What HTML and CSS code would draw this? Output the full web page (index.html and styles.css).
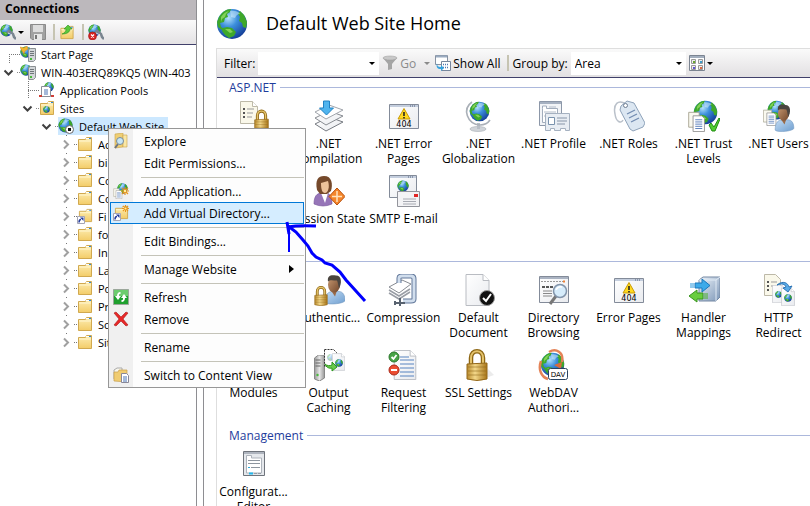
FILE: index.html
```html
<!DOCTYPE html>
<html lang="en">
<head>
<meta charset="utf-8">
<title>Internet Information Services Manager</title>
<link rel="stylesheet" href="styles.css">
</head>
<body>
<svg class="defs" aria-hidden="true">
  <defs>
    <radialGradient id="sea" cx=".38" cy=".3" r=".75"><stop offset="0" stop-color="#b5e2fb"/><stop offset=".4" stop-color="#3c8fdc"/><stop offset="1" stop-color="#123a94"/></radialGradient>
    <linearGradient id="gold" x2="1" y2="0"><stop offset="0" stop-color="#b98a2c"/><stop offset=".4" stop-color="#f3d88a"/><stop offset="1" stop-color="#a87518"/></linearGradient>
    <linearGradient id="folderFill" x2="0" y2="1"><stop offset="0" stop-color="#fdeeb4"/><stop offset="1" stop-color="#f3cc68"/></linearGradient>
    <linearGradient id="sheet" x2="1" y2="1"><stop offset="0" stop-color="#fff"/><stop offset="1" stop-color="#e9ebef"/></linearGradient>
    <linearGradient id="steel" x2="1" y2="1"><stop offset="0" stop-color="#eef4fa"/><stop offset="1" stop-color="#7d97b8"/></linearGradient>
    <linearGradient id="shirt" x2="1" y2="1"><stop offset="0" stop-color="#c3dcf4"/><stop offset="1" stop-color="#6f9fd0"/></linearGradient>
    <linearGradient id="skin" x2="1" y2="1"><stop offset="0" stop-color="#c99a72"/><stop offset="1" stop-color="#6f452a"/></linearGradient>
    <linearGradient id="tower" x2="1" y2="0"><stop offset="0" stop-color="#9a9a9a"/><stop offset=".5" stop-color="#e6e6e6"/><stop offset="1" stop-color="#989898"/></linearGradient>
  </defs>
  <symbol id="globe" viewBox="0 0 32 32">
    <circle cx="16" cy="16" r="15" fill="url(#sea)"/>
    <path d="M3 9C6 4 10 1 15 1l-1 3-3 2 1 3-3 1-1 4-4 1 1 4 3 2-2 1-4-3-1-5zM24 3l4 4 3 7-1 6-3-1-1-4-3-2 1-4-2-3zM7 20l4-1 5 1 4 4-2 4-5 2-4-3-3-4z" fill="#3ea82a"/>
    <path d="M5 9c2-3 4-5 8-6l-3 3-1 3-3 2-1 3zM9 21l5 0 3 3-3 1z" fill="#9ae06a" opacity=".75"/>
    <path d="M14 3c5-1 9 1 10 3-3 0-4 2-5 4l-4-1z" fill="#d9f1fd" opacity=".5"/>
  </symbol>
  <symbol id="lock" viewBox="0 0 22 32">
    <path d="M5 17V9c0-9 12-9 12 0v8" fill="none" stroke="#8e6714" stroke-width="4.500"/>
    <path d="M5 17V9c0-9 12-9 12 0v8" fill="none" stroke="#e5c46c" stroke-width="2"/>
    <path d="M1 15l20-1v16q-10 3-20 0z" fill="url(#gold)" stroke="#93681a"/>
    <path d="M2 18h18M2 22h18M2 26h18" stroke="#8d661a" opacity=".55"/>
  </symbol>
  <symbol id="folder" viewBox="0 0 16 16">
    <path d="M1.500 3.500h7l1-2h5v13h-13z" fill="url(#folderFill)" stroke="#d1a94f"/>
    <path d="M9 2.500h5" stroke="#fff"/><path d="M12 2.500h2" stroke="#2c86d8"/><path d="M2 5h12" stroke="#fff6d0"/>
  </symbol>
  <symbol id="shortcut" viewBox="0 0 8 8">
    <path d="M.5.500h7v7h-7z" fill="#fff" stroke="#a5a5b5"/><path d="M2 6.500C2 4 3 3.500 4 3.500" stroke="#223a9c" stroke-width="1.500" fill="none"/><path d="M3 1.500h3.500V5z" fill="#223a9c"/>
  </symbol>
  <symbol id="page" viewBox="0 0 24 32">
    <path d="M.5.500h17l6 6v25H.5z" fill="url(#sheet)" stroke="#b9bcc2"/><path d="M17.500.500v6h6" fill="#fff" stroke="#b9bcc2"/>
  </symbol>
  <symbol id="cert" viewBox="0 0 32 32">
    <path d="M2.500 1.500h12l5 5v17h-17z" fill="#faf8ea" stroke="#bdb9a8"/><path d="M14.500 1.500v5h5" fill="#fff" stroke="#bdb9a8"/>
    <path d="M5 9h2M5 13h2M5 17h2" stroke="#555" stroke-width="2"/><path d="M9 9h7M9 13h6M9 17h5" stroke="#999"/>
  </symbol>
  <symbol id="authorization" viewBox="0 0 32 32"><use href="#cert"/><use href="#lock" x="16" y="9" width="15" height="23"/></symbol>
  <symbol id="compilation" viewBox="0 0 32 32">
    <path d="M2 24l14-7 14 5-17 9z" fill="url(#sheet)" stroke="#777b82"/><path d="M2 18l14-7 14 5-17 9z" fill="url(#sheet)" stroke="#888c92"/><path d="M2 12l14-7 14 5-17 9z" fill="#fff" stroke="#a1a5ac"/>
    <path d="M10.500 1h6v7h4l-7 7-7-7h4z" fill="#50b4ee" stroke="#2182c4"/>
  </symbol>
  <symbol id="window" viewBox="0 0 32 32">
    <path d="M1.500 4.500h29v24h-29z" fill="url(#sheet)" stroke="#838b99"/><path d="M2 6h28" stroke="#c4cede" stroke-width="2"/><path d="M22 6h6" stroke="#52617b" stroke-dasharray="1 1"/>
  </symbol>
  <symbol id="error" viewBox="0 0 32 32">
    <use href="#window"/><path d="M16 8.500l6 10.500H10z" fill="#ffd91f" stroke="#c99a07" stroke-linejoin="round"/><path d="M16 12v4M16 17v1.500" stroke="#222" stroke-width="1.600"/>
    <text x="16" y="27" class="icon-404">404</text>
  </symbol>
  <symbol id="globalization" viewBox="0 0 32 32">
    <ellipse cx="15" cy="29" rx="8" ry="2.500" fill="#d0d4d9" stroke="#a5abb2" stroke-width=".6"/><path d="M14 23h3v6h-3z" fill="#b8bec6"/>
    <path d="M9 2C-1 9 4 24 17 25c5 0 8-2 10-5" fill="none" stroke="#aab0b8" stroke-width="1.600"/><use href="#globe" x="6" y="1" width="21" height="21"/>
  </symbol>
  <symbol id="profile" viewBox="0 0 32 32">
    <path d="M1.500 1.500h22v24h-22z" fill="#f2f4f7" stroke="#8c97a8"/><path d="M2 3h21" stroke="#a6b1c1" stroke-width="2"/><path d="M4.500 8.500V6h4v2.500h11v14h-15z" fill="#fff" stroke="#a2adbc"/><path d="M11 7h7M6 12h12M6 16h4" stroke="#b3bcc9"/>
    <path d="M7.500 13.500h24v17h-4v-2h-5v2h-6v-2h-4v2h-5z" fill="#e8edf3" stroke="#a5b1c0"/><path d="M10.500 17.500h6v7h-6z" fill="#fff" stroke="#7992ad"/><path d="M19 18h10M19 21h10M19 24h8" stroke="#8795a8"/>
  </symbol>
  <symbol id="roles" viewBox="0 0 32 32">
    <path d="M13 4C5-1 0 4 2 14c1 8 6 10 8 6" fill="none" stroke="#bac1ca" stroke-width="1.500"/>
    <path d="M8 6l6-5 7 2 11 20-2 4-10 4-3-2L7 10z" fill="#dce7f2" stroke="#8ea2b9"/><circle cx="12.500" cy="5.500" r="2" fill="#fff" stroke="#6e7e92"/>
    <path d="M14 14l8-4M16 18l8-4M18 22l8-4" stroke="#718bb0" stroke-width="1.300"/>
  </symbol>
  <symbol id="docs" viewBox="0 0 20 24">
    <path d="M.5 1.500h12v17H.5z" fill="#faf9ef" stroke="#a4a08e"/><path d="M5.500 5.500h10l3 3v15h-13z" fill="#fff" stroke="#8e8e8e"/><path d="M8 10h8M8 12.500h8M8 15h8M8 17.500h8M8 20h8" stroke="#4b74b4"/>
  </symbol>
  <symbol id="trust" viewBox="0 0 32 32"><use href="#globe" x="5" y="0" width="25" height="25"/><use href="#docs" x="0" y="11" width="18" height="21"/><path d="M21 25l2-2 3 4 5-9 1 1-5 12h-3z" fill="#51cc31" stroke="#218e13"/></symbol>
  <symbol id="man" viewBox="0 0 22 30">
    <path d="M1 28C1 20 4 17 9 17h6c4 0 6 4 6 9 0 3-17 5-20 2z" fill="url(#shirt)" stroke="#7399c0" stroke-width=".6"/><path d="M7 16h6l-2 6z" fill="#9a6b49"/><ellipse cx="10" cy="10" rx="6" ry="8" fill="url(#skin)"/><path d="M4 7C3 1 7 0 12 1c6 0 6 8 3 13-1-4-1-6-2-8-4 0-7-1-9 1z" fill="#4a4540"/>
  </symbol>
  <symbol id="users" viewBox="0 0 32 32"><use href="#globe" x="4" y="0" width="20" height="20"/><use href="#docs" x="0" y="9" width="14" height="17"/><use href="#man" x="11" y="4" width="21" height="28"/></symbol>
  <symbol id="session" viewBox="0 0 32 32">
    <path d="M1 29c0-8 3-11 8-11h5c4 1 5 6 5 11q-9 4-18 0z" fill="#9675b8" stroke="#735198" stroke-width=".6"/><path d="M8 18l4 10 3-10z" fill="#fff"/><path d="M4 15C2 5 5 1 11 1c8 0 9 8 7 15l-4 3H7z" fill="#75492b"/><path d="M8 8l7-2c2 6 0 12-3 12s-4-4-4-10z" fill="#edc29a"/>
    <path d="M24 13l8 8.500-8 8.500-8-8.500z" fill="#f4862b" stroke="#b8500e"/><path d="M24 16v11M19 21.500h10" stroke="#ffe2bd" stroke-width="1.500"/>
  </symbol>
  <symbol id="smtp" viewBox="0 0 32 32">
    <path d="M1.500.500h27v22h-27z" fill="url(#sheet)" stroke="#838b99"/><path d="M2 2h26" stroke="#c4cede" stroke-width="2"/><path d="M20 2h6" stroke="#52617b" stroke-dasharray="1 1"/><use href="#globe" x="9" y="5" width="12" height="12"/>
    <path d="M9.500 16.500h22v15h-22z" fill="#f3f3f5" stroke="#93959c"/><path d="M26 19h4v3h-4z" fill="#e12525"/><path d="M15 24h13M15 26.500h13M15 29h13" stroke="#a7aab2"/>
  </symbol>
  <symbol id="authentication" viewBox="0 0 32 32"><use href="#man" x="11" y="0" width="22" height="31"/><use href="#lock" x="1" y="12" width="14" height="20"/></symbol>
  <symbol id="compression" viewBox="0 0 32 32">
    <path d="M1 13l13-7 9 4-12 9z" fill="#fff" stroke="#878b92"/><path d="M1 16l10 6 11-7M1 19l10 6 11-7" fill="none" stroke="#999da5" stroke-width="1.500"/>
    <path d="M11 9V4q0-2 3-2h9q3 0 3 3v20q0 2-3 2h-8" fill="none" stroke="#62789a" stroke-width="5"/><path d="M11 9V4q0-2 3-2h9q3 0 3 3v20q0 2-3 2h-8" fill="none" stroke="#d1deed" stroke-width="3"/><path d="M7 29h10M12 24v8M7 27v4" stroke="#58626f" stroke-width="2"/>
  </symbol>
  <symbol id="document" viewBox="0 0 32 32"><use href="#page" x="2" y="0" width="25" height="32"/><circle cx="24" cy="24" r="7.500" fill="#111" stroke="#999"/><path d="M20 24l3 3 5-7" fill="none" stroke="#fff" stroke-width="2"/></symbol>
  <symbol id="browsing" viewBox="0 0 32 32">
    <path d="M1.500 2.500h29v26h-29z" fill="url(#sheet)" stroke="#838b99"/><path d="M2 4h28" stroke="#aab3c2" stroke-width="2"/><path d="M3 7.500h22" stroke="#999" stroke-dasharray="2 1"/><path d="M25 7.500h2" stroke="#ee8138" stroke-width="2"/><path d="M4 13h12" stroke="#222" stroke-width="1.500" stroke-dasharray="3 1"/><path d="M5 17h9M5 19.500h9M5 22h9" stroke="#888"/>
    <path d="M18 22l-6 8" stroke="#777" stroke-width="3"/><circle cx="22" cy="17" r="6.500" fill="#d6ecfb" stroke="#8294aa" stroke-width="1.500"/><path d="M18 16q2-4 6-3" stroke="#fff" stroke-width="1.500" fill="none"/>
  </symbol>
  <symbol id="handler" viewBox="0 0 32 32">
    <path d="M11 6l4-3h17v20l-4 4H11z" fill="url(#steel)" stroke="#7488a3"/><path d="M11 6h17v21M28 6l4-3" fill="none" stroke="#e1ebf5"/>
    <path d="M3 9v5M5 9v5" stroke="#2796dc"/><path d="M7 9h7V5l8 6.500-8 6.500v-4H7z" fill="#3caae9" stroke="#1a78bd"/><path d="M15 19H9v-3l-8 6 8 6v-3h6z" fill="#68cd3e" stroke="#39951f"/><path d="M17 19v6M19 19v6" stroke="#4bb02a"/>
  </symbol>
  <symbol id="redirect" viewBox="0 0 32 32"><path d="M1.500.500h11l5 5v16h-16z" fill="#faf8ea" stroke="#bdb9a8"/><path d="M4 8h2M4 12h2M4 16h2" stroke="#555" stroke-width="2"/><path d="M8 8h6M8 12h6" stroke="#999"/>
    <use href="#page" x="9" y="11" width="14" height="18"/><use href="#globe" x="12" y="17" width="7" height="7"/><use href="#page" x="18" y="14" width="14" height="18"/><use href="#globe" x="21" y="20" width="8" height="8"/><path d="M14 11c6-5 11-2 12 2l3-1-4 6-5-4 3-1c-1-3-4-4-9-2z" fill="#5aabe6" stroke="#2c73b5"/>
  </symbol>
  <symbol id="towericon" viewBox="0 0 12 26"><path d="M1 3l4-3h6v23l-5 3-5-2z" fill="url(#tower)" stroke="#888"/><path d="M2 5h5M2 8h5M2 11h5" stroke="#666"/><circle cx="4" cy="20" r="1.200" fill="#49ba3d"/></symbol>
  <symbol id="output" viewBox="0 0 32 32"><use href="#towericon" x="0" y="6" width="13" height="26"/><path d="M11.500.500h9l3 3v14h-12z" fill="#fff" stroke="#333" stroke-dasharray="2 1"/><use href="#globe" x="14" y="5" width="7" height="7" opacity=".4"/><use href="#page" x="19" y="4" width="13" height="18"/><use href="#globe" x="22" y="10" width="8" height="8"/><path d="M12 15c2 2 5 2 7 1v-3l5 5-5 4v-3c-3 1-6-1-7-4z" fill="#68ca4b" stroke="#2f9820"/></symbol>
  <symbol id="filtering" viewBox="0 0 32 32"><use href="#page" x="5" y="1" width="24" height="30"/><path d="M12 8h9M12 11h14M12 15h14M12 19h14M12 23h14M12 27h14" stroke="#5683c0"/><circle cx="6" cy="8" r="5" fill="#48a447" stroke="#2a772b"/><path d="M3.500 8l2 2 3-4" stroke="#fff" stroke-width="1.800" fill="none"/><circle cx="6" cy="21" r="5" fill="#eb4d31" stroke="#aa2818"/><path d="M3 21h6" stroke="#fff" stroke-width="2"/></symbol>
  <symbol id="ssl" viewBox="0 0 32 32"><path d="M20 30l11-4-6-6z" fill="#ddd" opacity=".6"/><use href="#lock" x="3" y="0" width="22" height="32"/></symbol>
  <symbol id="webdav" viewBox="0 0 32 32"><use href="#globe" x="2" y="3" width="25" height="25"/><path d="M11 3c7-4 15 0 13 10M3 12C0 20 3 28 10 30" fill="none" stroke="#e48357" stroke-width="2.500"/><path d="M16 16l8-3-1 7" fill="#d96c3c"/><rect x="10.500" y="19.500" width="19" height="11" rx="2" fill="#fff" stroke="#28425f"/><text x="20" y="28" class="icon-dav">DAV</text></symbol>
  <symbol id="config" viewBox="0 0 32 32"><path d="M5.500 3.500h21v24h-21z" fill="#e5e8ec" stroke="#6f747c"/><path d="M6 5h20" stroke="#aeb4be" stroke-width="2"/><path d="M8.500 10V7.500h5V10h10v15h-15z" fill="#fff" stroke="#adb3bb"/><path d="M10 12.500h12M10 15.500h12" stroke="#8e969f"/><path d="M10 19.500h2" stroke="#2aa9d9"/><path d="M13 19.500h9" stroke="#8e969f"/><path d="M11 25.500h4" stroke="#21b8ee" stroke-width="2"/><path d="M16 25.500h8" stroke="#969da6" stroke-dasharray="3 1"/></symbol>

  <symbol id="connect" viewBox="0 0 16 16"><use href="#globe" width="13" height="13"/><path d="M7 9l2-2 4 3 1 3 2 2" stroke="#7a8590" stroke-width="2.500" fill="none"/><path d="M8 9l4 2" stroke="#dce4ec"/></symbol>
  <symbol id="disconnect" viewBox="0 0 16 16"><use href="#connect"/><circle cx="4.500" cy="12" r="4" fill="#d92424" stroke="#9c1414" stroke-width=".6"/><path d="M3 10.500l3 3m0-3l-3 3" stroke="#fff" stroke-width="1.300"/></symbol>
  <symbol id="save" viewBox="0 0 16 16"><path d="M.5.500h15v15H2l-1.500-1.500z" fill="#a2a2a2" stroke="#8b8b8b"/><path d="M3 1h10v7H3z" fill="#dedede"/><path d="M4 10h8v6H4z" fill="#e7e7e7"/><path d="M5 11h2v4H5z" fill="#777"/></symbol>
  <symbol id="up" viewBox="0 0 16 16"><use href="#folder" y="1" width="16" height="15"/><path d="M3 10c3-1 4-3 4-5H5l4-4 4 4h-2c0 3-3 5-8 5z" fill="#59c83c" stroke="#2c9020" stroke-width=".6"/></symbol>
  <symbol id="server" viewBox="0 0 16 16"><use href="#globe" width="12" height="12"/><path d="M8.500 3.500l2-1h5v11l-2 2h-5z" fill="#d2d6d8" stroke="#8b8f92"/><path d="M10 5.500h4M10 7.500h4M10 9.500h4" stroke="#70767a"/><path d="M10 12h2v2h-2z" fill="#49ba3d"/></symbol>
  <symbol id="start" viewBox="0 0 16 16"><use href="#server"/><path d="M0 1l4 1 3-2 1 3-3 2-1 3-2-3z" fill="#f3b52e" stroke="#ce8719" stroke-width=".5"/></symbol>
  <symbol id="pools" viewBox="0 0 16 16"><use href="#globe" x="5" width="10" height="10"/><path d="M2.500 4.500h7l2 2v8h-9z" fill="#fff" stroke="#8a8f98"/><path d="M5 8h4M5 10h4M5 12h4" stroke="#4b74b4"/><path d="M0 13h3v2H0zM12 13h3v2h-3z" fill="#cf4038"/></symbol>
  <symbol id="sites" viewBox="0 0 16 16"><use href="#folder"/><use href="#globe" x="4" y="6" width="7" height="7"/></symbol>
  <symbol id="site" viewBox="0 0 16 16"><use href="#globe" width="15" height="15"/><circle cx="11.500" cy="11.500" r="4" fill="#fff" stroke="#666"/><path d="M10 10h3v3h-3z" fill="#111"/></symbol>
  <symbol id="virtual" viewBox="0 0 16 16"><use href="#folder" x="1" width="15" height="15"/><use href="#shortcut" y="8" width="8" height="8"/></symbol>
  <symbol id="explore" viewBox="0 0 16 16"><path d="M2 1l8-1v14l-8 1z" fill="#efcf75" stroke="#caa147" stroke-width=".6"/><path d="M10 2h4v12h-4z" fill="#f9e7a6" stroke="#caa147" stroke-width=".6"/><path d="M5 11l-3 4" stroke="#6f7680" stroke-width="2"/><circle cx="7" cy="8" r="3.500" fill="#c8e6f5" stroke="#788b9b"/></symbol>
  <symbol id="spark" viewBox="0 0 8 8"><path d="M4 0v8M0 4h8M1 1l6 6M7 1L1 7" stroke="#e99418" stroke-width="1.200"/><circle cx="4" cy="4" r="1.200" fill="#fff1a0"/></symbol>
  <symbol id="addapp" viewBox="0 0 16 16"><use href="#globe" x="4" width="11" height="11"/><use href="#docs" x="0" y="5" width="10" height="11"/><use href="#spark" x="8" y="4" width="8" height="8"/></symbol>
  <symbol id="addvirtual" viewBox="0 0 16 16"><use href="#virtual"/><use href="#spark" x="9" y="0" width="7" height="7"/></symbol>
  <symbol id="refresh" viewBox="0 0 16 16"><path d="M.5.500h15v15H.5z" fill="#1fa02e" stroke="#9ba79b"/><path d="M1 1h14v6H1z" fill="#6ccc6e"/><path d="M7.500 3C5 3 4 5 4 7H2l3 4 3-4H6c0-2 0-2 1.500-2zM8.500 13c2.500 0 3.500-2 3.500-4h2l-3-4-3 4h2c0 2 0 2-1.500 2z" fill="#fff"/></symbol>
  <symbol id="remove" viewBox="0 0 16 16"><path d="M1 2l2-1 5 5 5-5 2 1-5 6 5 6-2 1-5-5-5 5-2-1 5-6z" fill="#e72828" stroke="#a91b1b" stroke-width=".6"/></symbol>
  <symbol id="switch" viewBox="0 0 16 16"><path d="M1 3l3-2h5v11H1z" fill="#f8f6ec" stroke="#aaa"/><path d="M1 14V5h4l1-2h8v12z" fill="#f0cc71" stroke="#c79f4b" stroke-width=".7"/><path d="M8.500 6.500h5l2 2v7h-7z" fill="#fff" stroke="#889"/><path d="M10 10h4M10 12h4M10 14h4" stroke="#4b74b4"/></symbol>
  <symbol id="funnel" viewBox="0 0 16 16"><path d="M1 3h14l-5 6v5l-4 1V9z" fill="#a5a5a5"/><ellipse cx="8" cy="3" rx="7" ry="2" fill="#c8c8c8" stroke="#999" stroke-width=".5"/></symbol>
  <symbol id="showall" viewBox="0 0 16 16"><path d="M.5.500h12v9H.5z" fill="#fff" stroke="#8691a1"/><path d="M1 1.500h11" stroke="#9aabc0" stroke-width="2"/><path d="M6.500 6.500h9v9h-9z" fill="#fff" stroke="#77869c"/><path d="M8 9.500h6M8 12.500h6" stroke="#5178b0" stroke-width="1.500" stroke-dasharray="1 1"/><path d="M2 8c0 3 1 4 4 4v-2l3 3-3 3v-2c-4 0-5-2-4-6z" fill="#36a3df"/></symbol>
  <symbol id="views" viewBox="0 0 16 16"><path d="M.5.500h15v15H.5z" fill="#fff" stroke="#7b8491"/><path d="M1 2h14" stroke="#a3afbe" stroke-width="2"/><path d="M2.500 4.500h4v4h-4zM9.500 4.500h4v4h-4zM2.500 10.500h4v4h-4zM9.500 10.500h4v4h-4z" fill="#eee" stroke="#999"/><path d="M4 6h2v2H4z" fill="#69a72e"/><path d="M11 6h2v2h-2z" fill="#3b9ccc"/><path d="M4 12h2v2H4z" fill="#6254d2"/><path d="M11 12h2v2h-2z" fill="#dc6943"/></symbol>

  <symbol id="t-start" viewBox="0 0 20 18"><path d="M9.500 9v9M9 9.500h11" stroke="#777" stroke-dasharray="1 1" fill="none"/></symbol>
  <symbol id="t-leaf" viewBox="0 0 20 18"><path d="M9.500 0v18M9 9.500h11" stroke="#777" stroke-dasharray="1 1" fill="none"/></symbol>
  <symbol id="t-open" viewBox="0 0 20 18"><path d="M4.500 7.500l4 4 4-4" stroke="#404040" stroke-width="2" fill="none"/><path d="M17 9.500h3" stroke="#888" stroke-dasharray="1 1"/></symbol>
  <symbol id="t-closed" viewBox="0 0 20 18"><path d="M7 5.500l4 4-4 4" stroke="#a0a0a0" stroke-width="2" fill="none"/><path d="M17 9.500h3M9.500 0v1" stroke="#777" stroke-dasharray="1 1"/></symbol>
</svg>

<div class="app">
  <aside class="connections">
    <h2 class="pane-title">Connections</h2>
    <div class="bar">
      <button class="tool drop" aria-label="Connect"><svg class="i16"><use href="#connect"/></svg><span class="caret"></span></button>
      <button class="tool" aria-label="Save"><svg class="i16"><use href="#save"/></svg></button>
      <span class="divider"></span>
      <button class="tool" aria-label="Up"><svg class="i16"><use href="#up"/></svg></button>
      <span class="divider"></span>
      <button class="tool" aria-label="Disconnect"><svg class="i16"><use href="#disconnect"/></svg></button>
    </div>
    <ul class="tree">
      <li><div class="node"><svg class="twig"><use href="#t-start"/></svg><svg class="i16"><use href="#start"/></svg><span>Start Page</span></div></li>
      <li><div class="node"><svg class="twig"><use href="#t-open"/></svg><svg class="i16"><use href="#server"/></svg><span>WIN-403ERQ89KQ5 (WIN-403</span></div>
        <ul>
          <li><div class="node"><svg class="twig"><use href="#t-leaf"/></svg><svg class="i16"><use href="#pools"/></svg><span>Application Pools</span></div></li>
          <li><div class="node"><svg class="twig"><use href="#t-open"/></svg><svg class="i16"><use href="#sites"/></svg><span>Sites</span></div>
            <ul>
              <li><div class="node"><svg class="twig"><use href="#t-open"/></svg><div class="picked"><svg class="i16"><use href="#site"/></svg><span>Default Web Site</span></div></div>
                <ul>
                  <li><div class="node"><svg class="twig"><use href="#t-closed"/></svg><svg class="i16"><use href="#folder"/></svg><span>Ac</span></div></li>
                  <li><div class="node"><svg class="twig"><use href="#t-closed"/></svg><svg class="i16"><use href="#folder"/></svg><span>bi</span></div></li>
                  <li><div class="node"><svg class="twig"><use href="#t-closed"/></svg><svg class="i16"><use href="#folder"/></svg><span>Co</span></div></li>
                  <li><div class="node"><svg class="twig"><use href="#t-closed"/></svg><svg class="i16"><use href="#folder"/></svg><span>Co</span></div></li>
                  <li><div class="node"><svg class="twig"><use href="#t-closed"/></svg><svg class="i16"><use href="#virtual"/></svg><span>Fi</span></div></li>
                  <li><div class="node"><svg class="twig"><use href="#t-closed"/></svg><svg class="i16"><use href="#folder"/></svg><span>fo</span></div></li>
                  <li><div class="node"><svg class="twig"><use href="#t-closed"/></svg><svg class="i16"><use href="#folder"/></svg><span>In</span></div></li>
                  <li><div class="node"><svg class="twig"><use href="#t-closed"/></svg><svg class="i16"><use href="#folder"/></svg><span>La</span></div></li>
                  <li><div class="node"><svg class="twig"><use href="#t-closed"/></svg><svg class="i16"><use href="#folder"/></svg><span>Po</span></div></li>
                  <li><div class="node"><svg class="twig"><use href="#t-closed"/></svg><svg class="i16"><use href="#folder"/></svg><span>Pr</span></div></li>
                  <li><div class="node"><svg class="twig"><use href="#t-closed"/></svg><svg class="i16"><use href="#folder"/></svg><span>Sc</span></div></li>
                  <li><div class="node"><svg class="twig"><use href="#t-closed"/></svg><svg class="i16"><use href="#folder"/></svg><span>Sit</span></div></li>
                </ul>
              </li>
            </ul>
          </li>
        </ul>
      </li>
    </ul>
  </aside>

  <main class="home">
    <header class="heading"><svg class="i32"><use href="#globe"/></svg><h1>Default Web Site Home</h1></header>
    <div class="content">
      <div class="filters">
        <label for="filter">Filter:</label>
        <div class="combo filter-box"><input id="filter" type="text"><span class="caret"></span></div>
        <button class="tool go" disabled><svg class="i16"><use href="#funnel"/></svg>Go<span class="caret"></span></button>
        <button class="tool show"><svg class="i16"><use href="#showall"/></svg>Show All</button>
        <span class="divider"></span>
        <label for="group">Group by:</label>
        <div class="combo group-box"><select id="group"><option>Area</option></select><span class="caret"></span></div>
        <button class="tool views" aria-label="Views"><svg class="i16"><use href="#views"/></svg><span class="caret"></span></button>
      </div>
      <div class="groups">
        <section>
          <h3>ASP.NET</h3>
          <div class="tiles">
            <div class="tile"><svg class="i32"><use href="#authorization"/></svg></div>
            <div class="tile"><svg class="i32"><use href="#compilation"/></svg>.NET<br>Compilation</div>
            <div class="tile"><svg class="i32"><use href="#error"/></svg>.NET Error<br>Pages</div>
            <div class="tile"><svg class="i32"><use href="#globalization"/></svg>.NET<br>Globalization</div>
            <div class="tile"><svg class="i32"><use href="#profile"/></svg>.NET Profile</div>
            <div class="tile"><svg class="i32"><use href="#roles"/></svg>.NET Roles</div>
            <div class="tile"><svg class="i32"><use href="#trust"/></svg>.NET Trust<br>Levels</div>
            <div class="tile"><svg class="i32"><use href="#users"/></svg>.NET Users</div>
            <div class="tile"></div>
            <div class="tile"><svg class="i32"><use href="#session"/></svg>Session State</div>
            <div class="tile"><svg class="i32"><use href="#smtp"/></svg>SMTP E-mail</div>
          </div>
        </section>
        <section>
          <h3 aria-label="IIS"></h3>
          <div class="tiles">
            <div class="tile"></div>
            <div class="tile"><svg class="i32"><use href="#authentication"/></svg>Authentic...</div>
            <div class="tile"><svg class="i32"><use href="#compression"/></svg>Compression</div>
            <div class="tile"><svg class="i32"><use href="#document"/></svg>Default<br>Document</div>
            <div class="tile"><svg class="i32"><use href="#browsing"/></svg>Directory<br>Browsing</div>
            <div class="tile"><svg class="i32"><use href="#error"/></svg>Error Pages</div>
            <div class="tile"><svg class="i32"><use href="#handler"/></svg>Handler<br>Mappings</div>
            <div class="tile"><svg class="i32"><use href="#redirect"/></svg>HTTP<br>Redirect</div>
            <div class="tile"><svg class="i32"></svg>Modules</div>
            <div class="tile"><svg class="i32"><use href="#output"/></svg>Output<br>Caching</div>
            <div class="tile"><svg class="i32"><use href="#filtering"/></svg>Request<br>Filtering</div>
            <div class="tile"><svg class="i32"><use href="#ssl"/></svg>SSL Settings</div>
            <div class="tile"><svg class="i32"><use href="#webdav"/></svg>WebDAV<br>Authori...</div>
          </div>
        </section>
        <section>
          <h3>Management</h3>
          <div class="tiles">
            <div class="tile"><svg class="i32"><use href="#config"/></svg>Configurat...<br>Editor</div>
          </div>
        </section>
      </div>
    </div>
  </main>
</div>

<div class="menu" role="menu">
  <button role="menuitem"><svg class="i16"><use href="#explore"/></svg>Explore</button>
  <button role="menuitem"><svg class="i16"></svg>Edit Permissions...</button>
  <hr>
  <button role="menuitem"><svg class="i16"><use href="#addapp"/></svg>Add Application...</button>
  <button role="menuitem" class="hot"><svg class="i16"><use href="#addvirtual"/></svg>Add Virtual Directory...</button>
  <hr>
  <button role="menuitem"><svg class="i16"></svg>Edit Bindings...</button>
  <hr>
  <button role="menuitem"><svg class="i16"></svg>Manage Website<span class="more"></span></button>
  <hr>
  <button role="menuitem"><svg class="i16"><use href="#refresh"/></svg>Refresh</button>
  <button role="menuitem"><svg class="i16"><use href="#remove"/></svg>Remove</button>
  <hr>
  <button role="menuitem"><svg class="i16"></svg>Rename</button>
  <hr>
  <button role="menuitem"><svg class="i16"><use href="#switch"/></svg>Switch to Content View</button>
</div>

<svg class="pen" viewBox="0 0 84 86" aria-hidden="true">
  <path d="M5 8l8 6 7 8 5 6 4 7 4 4 6 3 3 3 7 2 8 7 6 8 19 21" stroke-width="3"/>
  <path d="M4 4l2 12M5 9q10-2 28-1" stroke-width="3"/>
  <path d="M6 8v26" stroke-width="2"/>
</svg>
</body>
</html>
```

FILE: styles.css
```css
* { box-sizing: border-box; }

body {
  margin: 0;
  height: 100vh;
  overflow: hidden;
  background: #fff;
  color: #000;
  font: 12px/15px "Open Sans", "Noto Sans", sans-serif;
}

h1, h2, h3, ul { margin: 0; padding: 0; font-weight: 400; }
ul { list-style: none; }
button, input, select { margin: 0; border: 0; padding: 0; background: none; color: inherit; font: inherit; }

.defs { position: absolute; width: 0; height: 0; }
.i16 { width: 16px; height: 16px; flex: none; }
.i32 { width: 32px; height: 32px; flex: none; }
.icon-404 { font: 400 8px "DejaVu Sans", sans-serif; text-anchor: middle; }
.icon-dav { font: 400 7px "DejaVu Sans", sans-serif; text-anchor: middle; }

.app { display: grid; grid-template-columns: 197px minmax(0, 1fr); column-gap: 6px; height: 100%; }

/* Connections pane */
.connections { border-right: 1px solid #8e8e92; overflow: hidden; }
.pane-title { height: 20px; padding: 0 5px; background: #bcb8bc; font-size: 12px; line-height: 18px; font-weight: 700; }
.bar { display: flex; align-items: center; height: 25px; gap: 4px; border-bottom: 1px solid #40406a; background: linear-gradient(#fafafa, #e4e2e4); }
.tool { display: flex; align-items: center; gap: 4px; white-space: nowrap; }
.drop { gap: 2px; margin-right: 2px; }
.divider { width: 2px; height: 16px; margin-left: 3px; background: #c6c4b2; flex: none; }
.caret { border: 3px solid transparent; border-top-color: #000; border-bottom: 0; flex: none; }

.tree { font-size: 11px; }
.tree ul { padding-left: 19px; }
.node { display: flex; align-items: center; height: 18px; white-space: nowrap; }
.node .i16 { margin-right: 5px; }
.twig { width: 20px; height: 18px; flex: none; }
.picked { display: flex; align-items: center; height: 18px; padding-right: 4px; background: #cce8ff; }

/* Home page */
.home { display: flex; flex-direction: column; border-left: 1px solid #8e8e92; padding-left: 12px; overflow: hidden; }
.heading { display: flex; align-items: center; gap: 18px; height: 48px; flex: none; }
.heading h1 { padding-bottom: 2px; font-size: 18px; line-height: 24px; }
.content { flex: 1; min-height: 0; border-left: 1px solid #dedede; }
.filters { display: flex; align-items: center; height: 30px; padding-left: 7px; border-top: 1px solid #dedede; border-bottom: 1px solid #40406a; background: linear-gradient(#fafafa, #e2e0e2); white-space: nowrap; }
.filters .divider { margin: 0 4px 0 6px; }
.combo { display: flex; align-items: center; height: 23px; margin-left: 3px; padding-right: 4px; background: #fff; flex: none; }
.combo input, .combo select { flex: 1; min-width: 0; height: 100%; outline: 0; appearance: none; padding-left: 4px; }
.filter-box { width: 121px; }
.group-box { width: 115px; }
.go { margin-left: 3px; gap: 2px; color: #8a8a8a; }
.go .caret { margin-left: 6px; border-top-color: #8a8a8a; }
.show { margin-left: 5px; gap: 2px; }
.views { margin-left: 3px; gap: 2px; }

.groups { padding-top: 1px; }
section { margin-bottom: 3px; }
h3 { display: flex; align-items: center; gap: 4px; height: 16px; margin-bottom: 5px; padding-left: 12px; color: #1e3c9c; font-size: 12px; }
h3::after { content: ""; flex: 1; height: 1px; background: #acb8dc; }
.tiles { display: grid; grid-template-columns: repeat(auto-fill, 75px); grid-auto-rows: 75px; margin: 0 -8px 0 -1px; }
.tile { display: flex; flex-direction: column; align-items: center; text-align: center; white-space: nowrap; }
.tile .i32 { margin-bottom: 4px; }

/* Context menu over the tree */
.menu { position: absolute; left: 108px; top: 128px; width: 198px; padding: 1px; border: 1px solid #979797; background: linear-gradient(90deg, #f0f0f0 24px, #fdfdfd 24px); }
.menu button { display: flex; align-items: center; width: 194px; height: 22px; padding: 0 9px 0 2px; border: 1px solid transparent; gap: 15px; white-space: nowrap; text-align: left; }
.menu .hot { border-color: #0078d7; background: #d5edff; }
.menu hr { height: 1px; margin: 3px 0 2px 31px; border: 0; background: #c4c3b8; }
.more { margin-left: auto; border: 4px solid transparent; border-left: 5px solid #000; border-right: 0; }

.pen { position: absolute; left: 283px; top: 218px; width: 84px; height: 86px; fill: none; stroke: #0000fe; pointer-events: none; }
```
